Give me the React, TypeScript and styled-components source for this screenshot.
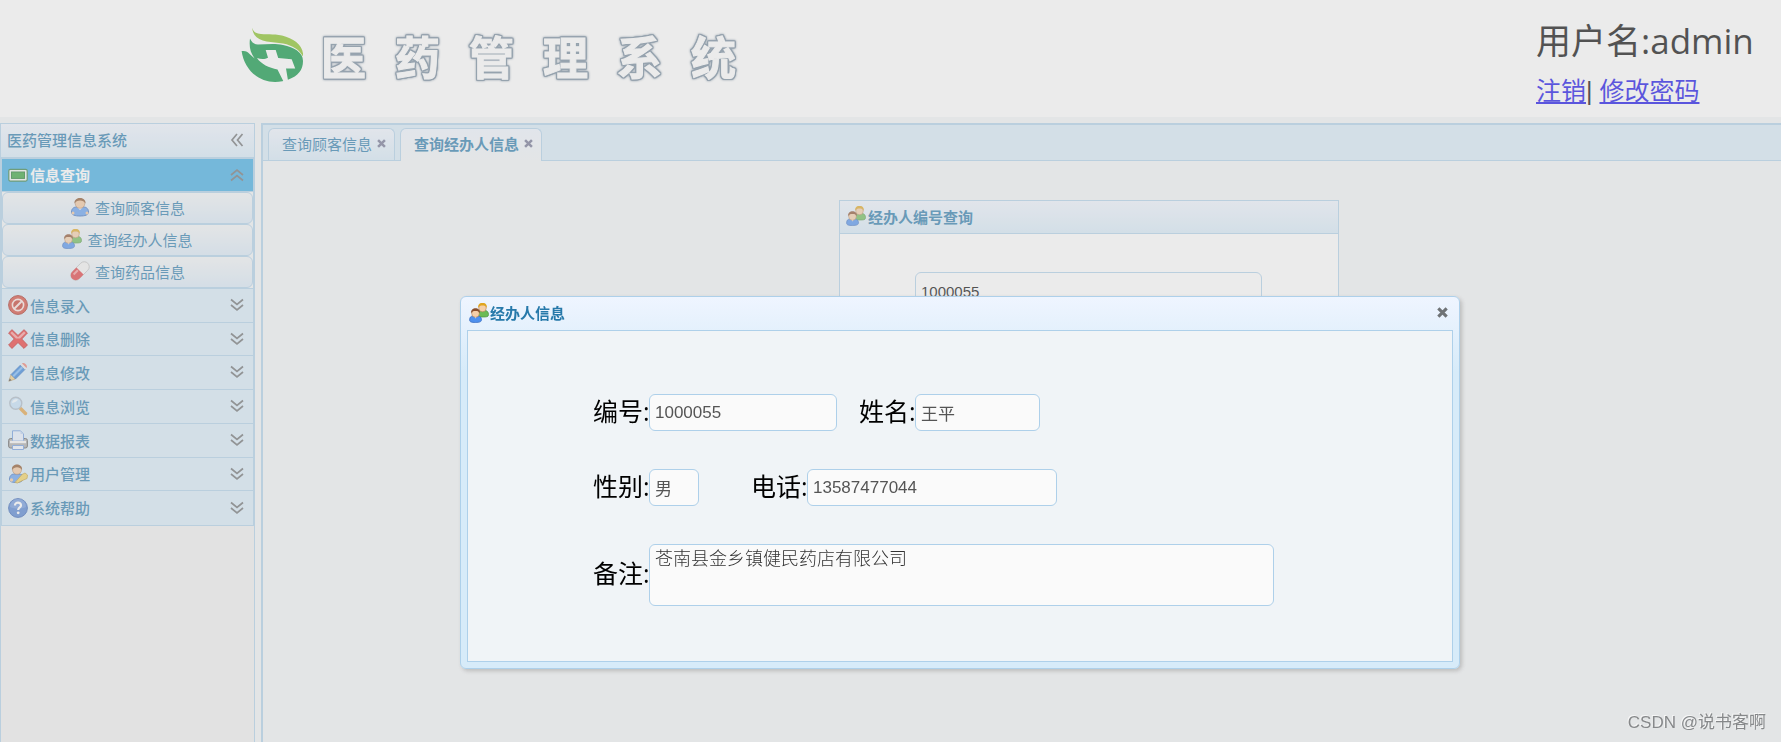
import React from "react";
import styled, { createGlobalStyle, css } from "styled-components";

const line = "#aed0ea";
const ink = "#2779aa";
const headFill = "linear-gradient(to bottom, #eff5ff, #d7ebf9)";

const GlobalStyle = createGlobalStyle`
  *, *::before, *::after { box-sizing: border-box; }
  body {
    margin: 0;
    background: #f2f5f7;
    font-family: "Open Sans", "Noto Sans CJK SC", sans-serif;
    font-size: 15px;
    color: #000;
  }
  button, input, textarea { font-family: inherit; }
  svg { display: block; flex: none; }
`;

const Page = styled.div`
  display: flex;
  flex-direction: column;
  height: 100vh;
  overflow: hidden;
`;

const Header = styled.header`
  display: flex;
  justify-content: space-between;
  height: 117px;
  flex: none;
  padding: 0 28px 0 241px;
  background: #fff;
`;

const Brand = styled.div`
  display: flex;
  gap: 18px;
  padding-top: 26px;
`;

const BrandName = styled.h1`
  display: flex;
  gap: 29px;
  margin: 0;
  font-size: 45px;
  line-height: 64px;
  font-weight: 700;
  color: #fff;
  -webkit-text-stroke: 1px #fff;
  stroke-linejoin: round;
  paint-order: stroke;
  filter: drop-shadow(1px 0 0 #72879a) drop-shadow(-1px 0 0 #72879a)
    drop-shadow(0 1px 0 #72879a) drop-shadow(0 -1px 0 #72879a)
    drop-shadow(0 0 1px #72879a);
`;

const Account = styled.div`
  width: 217px;
  padding-top: 15px;
  white-space: nowrap;
`;

const UserName = styled.div`
  font-size: 35px;
  line-height: 52px;
`;

const AccountLinks = styled.nav`
  margin-top: 5px;
  font-family: "Liberation Sans", "Noto Sans CJK SC", sans-serif;
  font-size: 25px;
  line-height: 38px;
`;

const TextLink = styled.a`
  color: #0e06e8;
  text-decoration: underline;
  text-underline-offset: 2px;
  text-decoration-thickness: 2px;
`;

const Body = styled.div`
  display: flex;
  flex: 1;
  gap: 6px;
  padding-top: 6px;
  min-height: 0;
`;

const Sidebar = styled.aside`
  width: 255px;
  flex: none;
  border: 1px solid ${line};
  border-bottom: 0;
  background: #f1f1f1;
`;

const SidebarTitle = styled.div`
  display: flex;
  align-items: center;
  justify-content: space-between;
  height: 34px;
  padding: 0 10px 2px 6px;
  border-bottom: 1px solid ${line};
  background: ${headFill};
  color: ${ink};
  font-weight: 500;
`;

const Accordion = styled.div`
  border: 1px solid ${line};
`;

const Section = styled.button<{ $open?: boolean }>`
  display: flex;
  align-items: center;
  gap: 2px;
  width: 100%;
  height: ${(p) => (p.$open ? 33 : 34)}px;
  padding: 0 9px 1px 6px;
  border: 0;
  border-bottom: 1px solid ${line};
  background: ${(p) => (p.$open ? "#3baae3" : "#d7ebf9")};
  color: ${(p) => (p.$open ? "#fff" : ink)};
  font-size: 15px;
  font-weight: ${(p) => (p.$open ? 700 : 500)};
  text-align: left;
  &:nth-child(4n) { height: 33px; }
  &:last-child { border-bottom: 0; }
`;

const SectionLabel = styled.span`
  flex: 1;
`;

const SubMenu = styled.div`
  background: #f2f5f7;
  border-bottom: 1px solid ${line};
`;

const SubItem = styled.button`
  display: flex;
  align-items: center;
  justify-content: center;
  gap: 5px;
  width: 100%;
  height: 32px;
  padding: 0 0 2px;
  border: 1px solid ${line};
  border-radius: 6px;
  background: linear-gradient(to bottom, #f2f5f7, #d9e9f7);
  color: ${ink};
  font-size: 15px;
`;

const Main = styled.main`
  flex: 1;
  min-width: 0;
  border: solid ${line};
  border-width: 2px 0 0 2px;
`;

const Tabs = styled.div`
  display: flex;
  align-items: flex-end;
  gap: 5px;
  height: 36px;
  padding: 0 5px;
  border-bottom: 1px solid ${line};
  background: #d7ebf9;
`;

const Tab = styled.div<{ $active?: boolean }>`
  display: flex;
  align-items: center;
  gap: 5px;
  height: 32px;
  padding: 0 8px 2px 13px;
  border: 1px solid ${line};
  border-bottom: 0;
  border-radius: 6px 6px 0 0;
  background: ${headFill};
  color: ${ink};
  ${(p) =>
    p.$active &&
    css`
      height: 33px;
      margin-bottom: -1px;
      padding-bottom: 3px;
      background: linear-gradient(to bottom, #eff5ff, #f2f5f7);
      font-weight: 700;
    `}
`;

const IconButton = styled.button`
  display: flex;
  padding: 0;
  border: 0;
  background: none;
`;

const QueryPanel = styled.section`
  width: 500px;
  margin: 39px 0 0 calc(50% - 183px);
  border: 1px solid ${line};
  background: #fff;
`;

const PanelHead = styled.h2`
  display: flex;
  align-items: center;
  gap: 2px;
  height: 33px;
  margin: 0;
  padding: 0 6px 2px;
  border-bottom: 1px solid ${line};
  background: ${headFill};
  color: ${ink};
  font-size: 15px;
  font-weight: 700;
`;

const PanelBody = styled.div`
  padding: 38px 76px 100px 75px;
`;

const field = css`
  border: 1px solid ${line};
  border-radius: 6px;
  background: #fafafa;
  color: #555;
  outline: none;
`;

const QueryInput = styled.input`
  ${field}
  display: block;
  width: 100%;
  height: 38px;
  padding: 0 5px;
  background: #fff;
  color: #000;
  font-family: "Liberation Sans", "Noto Sans CJK SC", sans-serif;
  font-size: 15px;
`;

const Mask = styled.div`
  position: fixed;
  inset: 0;
  background: rgba(204, 204, 204, 0.4);
`;

const Dialog = styled.section`
  position: fixed;
  top: 296px;
  left: 460px;
  width: 1000px;
  padding: 0 6px 6px;
  border: 1px solid ${line};
  border-radius: 6px;
  background: linear-gradient(to bottom, #eff5ff 0, #d7ebf9 20%);
  box-shadow: 2px 2px 4px #bbb;
`;

const DialogHead = styled.header`
  display: flex;
  align-items: center;
  justify-content: space-between;
  height: 33px;
  padding: 0 5px 2px 2px;
`;

const DialogTitle = styled.h2`
  display: flex;
  align-items: center;
  gap: 1px;
  margin: 0;
  color: ${ink};
  font-size: 15px;
  font-weight: 700;
`;

const DialogForm = styled.form`
  display: flex;
  flex-direction: column;
  gap: 38px;
  padding: 63px 125px 55px;
  border: 1px solid ${line};
  background: #f0f4f7;
`;

const FormRow = styled.div<{ $gap?: number }>`
  display: flex;
  align-items: center;
  gap: ${(p) => p.$gap ?? 0}px;
`;

const Field = styled.label`
  display: flex;
  align-items: center;
`;

const FieldName = styled.span`
  width: 56px;
  flex: none;
  padding-bottom: 4px;
  font-size: 25px;
  line-height: 32px;
  white-space: nowrap;
`;

const TextBox = styled.input<{ $width: number }>`
  ${field}
  width: ${(p) => p.$width}px;
  height: 37px;
  padding: 0 5px;
  font-family: "Liberation Sans", "Noto Sans CJK SC", sans-serif;
  font-size: 17px;
`;

const NoteBox = styled.textarea`
  ${field}
  width: 625px;
  height: 62px;
  padding: 0 5px;
  color: #333;
  font-family: "Noto Sans CJK SC", sans-serif;
  font-size: 18px;
  font-weight: 300;
  line-height: 24px;
  resize: none;
`;

const Watermark = styled.div`
  position: fixed;
  right: 15px;
  bottom: 6px;
  font-family: "Liberation Sans", "Noto Sans CJK SC", sans-serif;
  font-size: 17px;
  line-height: 26px;
  color: #86888a;
  text-shadow: -1px -1px 0 #f6f6f6;
`;

const Logo = () => (
  <svg width="62" height="58" viewBox="0 0 62 58">
    <path d="M11 1.500C12 5 14 7 17 7.500c8 1.500 15 0 24 2 12 3 22 10 21 21-4-7-10-11-20-13C30 15 13 18 11 1.500z" fill="#83c01d" />
    <path d="M9 12.500c2 4 4 6 8 6 8 0 16-1.500 25 .5 11 2.500 20 7 20 16 0 9-5 15-14.500 18.500C44 55 39 56 34 56 17 56 3 43 .6 25c4-.5 6 .5 8 3l5 4.500C9 26 8 20 9 12.500z" fill="#00923d" />
    <path d="M24.700 24h10l2.500 8 13.500 1.200 3.500 9.200H45l2 12-4.500 1-6-12C28 42 20 38 16 32c4 1.500 8 1.500 11-.3z" fill="#fff" />
  </svg>
);

const Head = ({ x, y, hair }: { x: number; y: number; hair: string }) => (
  <g>
    <circle cx={x} cy={y + 1} r="3.800" fill="#f5cfa8" stroke="#a9744a" strokeWidth=".5" />
    <path d={`M${x - 4.5} ${y + 1}c-.6-7 9.600-7 9 0-1-2-2-2.500-4.500-2.500s-3.500.5-4.500 2.500z`} fill={hair} />
  </g>
);

const UserIcon = () => (
  <svg width="20" height="20" viewBox="0 0 20 20">
    <path d="M1.500 15c0-4 3-5 5-5h7c2 0 5 1 5 5 0 3-3.500 4-8.500 4s-8.500-1-8.500-4z" fill="#5f9df0" stroke="#3a6fc0" />
    <circle cx="3" cy="16" r="1.500" fill="#f3c79d" />
    <circle cx="17" cy="16" r="1.500" fill="#f3c79d" />
    <path d="M7 10l3 3 3-3z" fill="#fff" />
    <circle cx="10" cy="6.500" r="4.800" fill="#f3c79d" stroke="#a9744a" strokeWidth=".6" />
    <path d="M4.500 6.500C3.500-1 16.500-1 15.500 6.500c-1-2-3-3-5.500-3s-4.500 1-5.500 3z" fill="#8a5328" />
  </svg>
);

const UsersIcon = () => (
  <svg width="20" height="20" viewBox="0 0 20 20">
    <path d="M9 12c0-3 1-4.500 3-4.500h4c2 0 3.500 1.500 3.500 4S17.500 14 14 14s-5 0-5-2z" fill="#6cbb55" stroke="#4a9440" strokeWidth=".7" />
    <Head x={13.5} y={4} hair="#e0a51e" />
    <path d="M.6 17c0-3 1.500-4 3.400-4h5c2 0 3.500 1.500 3.500 3.800 0 2-2 2.700-6 2.700S.6 19 .6 17z" fill="#4d90ee" stroke="#2f66bd" strokeWidth=".7" />
    <path d="M5 13l1.600 2.500L8 13z" fill="#fff" />
    <Head x={6.5} y={9.5} hair="#8a4f2c" />
  </svg>
);

const PillIcon = () => (
  <svg width="20" height="20" viewBox="0 0 20 20">
    <g transform="rotate(-45 10 10)">
      <rect x="-1" y="5" width="22" height="10" rx="5" fill="#f4f4f4" stroke="#b9b9b9" strokeWidth=".8" />
      <path d="M10 5v10H4A5 5 0 0 1 4 5z" fill="#e0393e" />
      <path d="M3 7h6v2H3z" fill="#f5989a" />
    </g>
  </svg>
);

const ScreenIcon = () => (
  <svg width="20" height="20" viewBox="0 0 20 20">
    <rect x=".8" y="4.300" width="18.400" height="11.800" rx="1.500" fill="#f2f6ee" stroke="#2f7d43" strokeWidth="1.200" />
    <rect x="3.500" y="7" width="13" height="6.400" fill="#31a035" stroke="#1f7b2a" />
  </svg>
);

const BlockIcon = () => (
  <svg width="20" height="20" viewBox="0 0 20 20">
    <circle cx="10" cy="10" r="9.400" fill="#d4493a" stroke="#a62e22" />
    <circle cx="10" cy="10" r="5.600" fill="#c43a2c" stroke="#fbe3df" strokeWidth="1.600" />
    <path d="M6 14l8-8" stroke="#fbe3df" strokeWidth="2" />
  </svg>
);

const CrossIcon = () => (
  <svg width="20" height="20" viewBox="0 0 20 20">
    <path d="M4 .7L10 6.500 16 .7 19.400 4 13.700 10l5.700 6-3.400 3.400-6-5.900-6 5.900L.6 16l5.700-6L.6 4z" fill="#ec3434" stroke="#c32222" strokeLinejoin="round" />
    <path d="M4 2.500l6 5.800 6-5.800L17.600 4 12 9.500H8L2.400 4z" fill="#f89a9a" />
  </svg>
);

const PencilIcon = () => (
  <svg width="20" height="20" viewBox="0 0 20 20">
    <path d="M.8 19.200L3 12.500 7.500 17z" fill="#f2cf86" stroke="#b08a4a" strokeWidth=".6" />
    <path d="M.8 19.200l.9-2.800 1.900 1.900z" fill="#444" />
    <path d="M3 12.500L12.500 3 17 7.500 7.500 17z" fill="#2f80dd" stroke="#1d5cae" strokeWidth=".6" />
    <path d="M4.500 13.500l9-9 1.500 1.500-9 9z" fill="#79b6f5" />
    <path d="M12.500 3L14 1.500 18.500 6 17 7.500z" fill="#e8e8e8" />
    <path d="M14 1.500c2-1.800 6.300 2 4.500 4.500z" fill="#ec7b6d" />
  </svg>
);

const SearchIcon = () => (
  <svg width="20" height="20" viewBox="0 0 20 20">
    <path d="M12.500 12.500l5 5" stroke="#e2a043" strokeWidth="3.400" strokeLinecap="round" />
    <circle cx="7.800" cy="7.300" r="6" fill="#c3e2fb" stroke="#a9b7c5" strokeWidth="1.400" />
    <path d="M4 7c0-3 3-4.500 6-3.500-1 2-3 3-6 3.500z" fill="#f2faff" />
  </svg>
);

const PrinterIcon = () => (
  <svg width="20" height="20" viewBox="0 0 20 20">
    <rect x=".6" y="8.500" width="18.800" height="9.500" rx="2" fill="#a9a9a9" stroke="#5d5d5d" />
    <path d="M4.500 11V.8h8L15.500 4v7z" fill="#e7f1ff" stroke="#6c9ae0" />
    <path d="M12.500.8V4h3z" fill="#b9d2f3" />
    <path d="M2 12h16" stroke="#f5f5f5" strokeWidth="2.400" />
    <path d="M4.500 15.500h11v4h-11z" fill="#eef5ff" stroke="#6c9ae0" />
  </svg>
);

const UserKeyIcon = () => (
  <svg width="20" height="20" viewBox="0 0 20 20">
    <path d="M1.500 15c0-4 3-5 5-5h4c3 0 5 1 5 4s-3 4.500-7 4.500S1.500 18 1.500 15z" fill="#5f9df0" stroke="#3a6fc0" />
    <circle cx="3.500" cy="16" r="1.700" fill="#f3c79d" />
    <path d="M7 18.500l7-8 3-1.500 2.500 2-.5 3.500-3.500 1.500-6 3z" fill="#f4d35c" stroke="#c29b2e" strokeWidth=".8" />
    <circle cx="9" cy="5.800" r="4.500" fill="#f3c79d" stroke="#a9744a" strokeWidth=".6" />
    <path d="M4 6C3-1.200 15-1.200 14 6c-1-2-3-2.800-5-2.800S5 4 4 6z" fill="#8a5328" />
  </svg>
);

const HelpIcon = () => (
  <svg width="20" height="20" viewBox="0 0 20 20">
    <circle cx="10" cy="10" r="9.400" fill="#4d7fd0" stroke="#3765b5" />
    <path d="M2 9a8 8 0 0 1 16 0c-5 2-11 2-16 0z" fill="#6a95dc" />
    <path d="M7 7.500c0-4 6.200-3.800 6 0-.1 2-2.800 2-2.800 4.500" fill="none" stroke="#fff" strokeWidth="2.200" />
    <circle cx="10.200" cy="14.800" r="1.400" fill="#fff" />
  </svg>
);

const Chevrons = ({ turn = 0 }: { turn?: number }) => (
  <svg width="14" height="14" viewBox="0 0 14 14">
    <g transform={`rotate(${turn} 7 7)`} fill="none" stroke="#6b6e70" strokeWidth="1.700">
      <path d="M1 1.500l6 5 6-5M1 7l6 5 6-5" />
    </g>
  </svg>
);

const CloseMark = ({ size, color }: { size: number; color: string }) => (
  <svg width={size} height={size} viewBox="0 0 10 10">
    <path d="M1.200 1.200l7.600 7.600M8.800 1.200l-7.600 7.600" stroke={color} strokeWidth="2.800" />
  </svg>
);

const sections = [
  { label: "信息录入", Icon: BlockIcon },
  { label: "信息删除", Icon: CrossIcon },
  { label: "信息修改", Icon: PencilIcon },
  { label: "信息浏览", Icon: SearchIcon },
  { label: "数据报表", Icon: PrinterIcon },
  { label: "用户管理", Icon: UserKeyIcon },
  { label: "系统帮助", Icon: HelpIcon },
];

const queries = [
  { label: "查询顾客信息", Icon: UserIcon },
  { label: "查询经办人信息", Icon: UsersIcon },
  { label: "查询药品信息", Icon: PillIcon },
];

export default function App() {
  return (
    <>
      <GlobalStyle />
      <Page>
        <Header>
          <Brand>
            <Logo />
            <BrandName>
              {[..."医药管理系统"].map((c) => (
                <span key={c}>{c}</span>
              ))}
            </BrandName>
          </Brand>
          <Account>
            <UserName>用户名:admin</UserName>
            <AccountLinks>
              <TextLink href="#logout">注销</TextLink>| <TextLink href="#password">修改密码</TextLink>
            </AccountLinks>
          </Account>
        </Header>

        <Body>
          <Sidebar>
            <SidebarTitle>
              医药管理信息系统
              <IconButton type="button" aria-label="collapse">
                <Chevrons turn={90} />
              </IconButton>
            </SidebarTitle>
            <Accordion>
              <Section type="button" $open>
                <ScreenIcon />
                <SectionLabel>信息查询</SectionLabel>
                <Chevrons turn={180} />
              </Section>
              <SubMenu>
                {queries.map(({ label, Icon }) => (
                  <SubItem type="button" key={label}>
                    <Icon />
                    {label}
                  </SubItem>
                ))}
              </SubMenu>
              {sections.map(({ label, Icon }) => (
                <Section type="button" key={label}>
                  <Icon />
                  <SectionLabel>{label}</SectionLabel>
                  <Chevrons />
                </Section>
              ))}
            </Accordion>
          </Sidebar>

          <Main>
            <Tabs>
              <Tab>
                查询顾客信息
                <IconButton type="button" aria-label="close">
                  <CloseMark size={9} color="#6e7190" />
                </IconButton>
              </Tab>
              <Tab $active>
                查询经办人信息
                <IconButton type="button" aria-label="close">
                  <CloseMark size={9} color="#6e7190" />
                </IconButton>
              </Tab>
            </Tabs>
            <QueryPanel>
              <PanelHead>
                <UsersIcon />
                经办人编号查询
              </PanelHead>
              <PanelBody>
                <QueryInput aria-label="经办人编号" defaultValue="1000055" />
              </PanelBody>
            </QueryPanel>
          </Main>
        </Body>
      </Page>

      <Mask />

      <Dialog role="dialog" aria-labelledby="dialog-title">
        <DialogHead>
          <DialogTitle id="dialog-title">
            <UsersIcon />
            经办人信息
          </DialogTitle>
          <IconButton type="button" aria-label="close">
            <CloseMark size={11} color="#6f7376" />
          </IconButton>
        </DialogHead>
        <DialogForm>
          <FormRow $gap={22}>
            <Field>
              <FieldName>编号:</FieldName>
              <TextBox $width={188} defaultValue="1000055" />
            </Field>
            <Field>
              <FieldName>姓名:</FieldName>
              <TextBox $width={125} defaultValue="王平" />
            </Field>
          </FormRow>
          <FormRow $gap={52}>
            <Field>
              <FieldName>性别:</FieldName>
              <TextBox $width={50} defaultValue="男" />
            </Field>
            <Field>
              <FieldName>电话:</FieldName>
              <TextBox $width={250} defaultValue="13587477044" />
            </Field>
          </FormRow>
          <FormRow>
            <Field>
              <FieldName>备注:</FieldName>
              <NoteBox defaultValue="苍南县金乡镇健民药店有限公司" />
            </Field>
          </FormRow>
        </DialogForm>
      </Dialog>

      <Watermark>CSDN @说书客啊</Watermark>
    </>
  );
}
